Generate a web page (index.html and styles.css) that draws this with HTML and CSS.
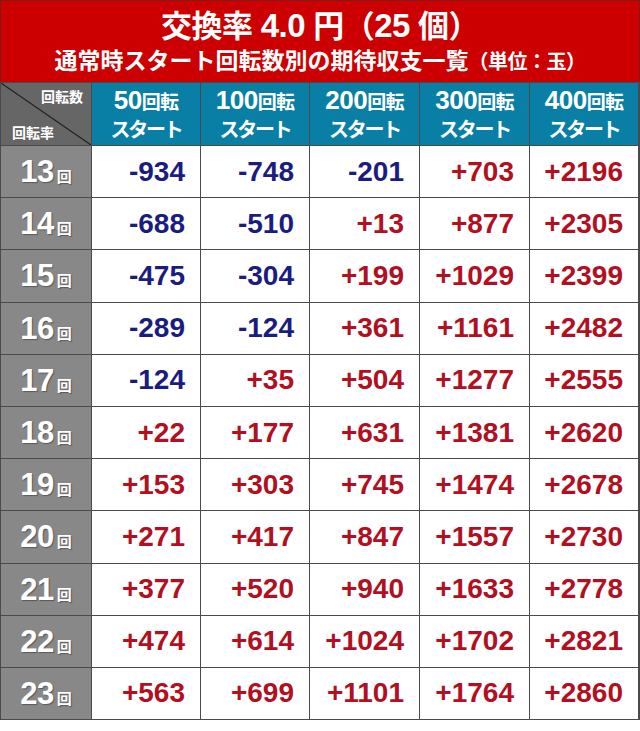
FILE: index.html
```html
<!DOCTYPE html>
<html lang="ja">
<head>
<meta charset="utf-8">
<link rel="stylesheet" href="styles.css">
</head>
<body>
<div class="sheet">
  <div class="title">
    <div class="t1">交換率 <span class="lat">4.0</span> 円（<span class="lat">25</span> 個）</div>
    <div class="t2">通常時スタート回転数別の期待収支一覧<span class="unit">（単位：玉）</span></div>
  </div>
  <div class="grid" id="grid">
    <div class="corner">
      <svg class="diag" viewBox="0 0 90 62" preserveAspectRatio="none"><line x1="0" y1="0" x2="90" y2="62" stroke="#222" stroke-width="1.2"/></svg>
      <span class="c-top">回転数</span>
      <span class="c-bot">回転率</span>
    </div>
    <div class="head"><div class="h1"><span class="hn">50</span>回転</div><div class="h2">スタート</div></div>
    <div class="head"><div class="h1"><span class="hn">100</span>回転</div><div class="h2">スタート</div></div>
    <div class="head"><div class="h1"><span class="hn">200</span>回転</div><div class="h2">スタート</div></div>
    <div class="head"><div class="h1"><span class="hn">300</span>回転</div><div class="h2">スタート</div></div>
    <div class="head"><div class="h1"><span class="hn">400</span>回転</div><div class="h2">スタート</div></div>
  </div>
</div>
<script src="app.js"></script>
</body>
</html>
```
FILE: app.js
```js
const data = [
  [13, -934, -748, -201, 703, 2196],
  [14, -688, -510, 13, 877, 2305],
  [15, -475, -304, 199, 1029, 2399],
  [16, -289, -124, 361, 1161, 2482],
  [17, -124, 35, 504, 1277, 2555],
  [18, 22, 177, 631, 1381, 2620],
  [19, 153, 303, 745, 1474, 2678],
  [20, 271, 417, 847, 1557, 2730],
  [21, 377, 520, 940, 1633, 2778],
  [22, 474, 614, 1024, 1702, 2821],
  [23, 563, 699, 1101, 1764, 2860]
];
const grid = document.getElementById('grid');
data.forEach(row => {
  const lab = document.createElement('div');
  lab.className = 'rlabel';
  lab.innerHTML = '<span class="rn">' + row[0] + '</span><span class="rk">回</span>';
  grid.appendChild(lab);
  for (let i = 1; i < row.length; i++) {
    const v = row[i];
    const c = document.createElement('div');
    c.className = 'cell ' + (v < 0 ? 'neg' : 'pos');
    c.textContent = (v < 0 ? '-' + Math.abs(v) : '+' + v);
    grid.appendChild(c);
  }
});
```
FILE: styles.css
```css
html, body { margin: 0; padding: 0; background: #fff; }
body { width: 640px; font-family: "Liberation Sans", "Noto Sans CJK JP", sans-serif; }
.sheet { width: 640px; }
.title {
  box-sizing: border-box;
  height: 82px;
  background: #cc0000;
  border: 1px solid #7a1a1a;
  border-bottom: none;
  color: #fff;
  font-weight: bold;
  text-align: center;
  display: flex;
  flex-direction: column;
  align-items: center;
  padding-top: 7px;
}
.t1 {
  font-family: "Liberation Sans", "Noto Sans CJK JP", sans-serif;
  font-size: 31px;
  line-height: 36px;
  letter-spacing: -0.5px;
  white-space: nowrap;
}
.t1 .lat { font-size: 33px; }
.t2 {
  font-family: "Noto Sans CJK JP", sans-serif;
  font-size: 23px;
  line-height: 28px;
  letter-spacing: 0;
  white-space: nowrap;
}
.t2 .unit { font-size: 20px; letter-spacing: -0.5px; }
.grid {
  display: grid;
  grid-template-columns: 90px 108px 108px 109px 109px 108px;
  grid-template-rows: 62px;
  grid-auto-rows: 51.2px;
  gap: 1px;
  padding: 1px;
  background: #4a4a4a;
}
.corner {
  position: relative;
  background: #666666;
  color: #fff;
  font-family: "Noto Sans CJK JP", sans-serif;
  font-weight: bold;
  font-size: 14px;
  line-height: 20px;
}
.diag { position: absolute; left: 0; top: 0; width: 100%; height: 100%; }
.c-top { position: absolute; right: 8px; top: 3px; }
.c-bot { position: absolute; left: 11px; bottom: 3px; }
.head {
  background: #0a7fa6;
  color: #fff;
  font-weight: bold;
  display: flex;
  flex-direction: column;
  align-items: center;
  justify-content: center;
  font-family: "Noto Sans CJK JP", sans-serif;
}
.h1 { font-size: 19px; line-height: 29px; letter-spacing: -0.8px; display: flex; align-items: baseline; }
.hn { font-family: "Liberation Sans", sans-serif; font-size: 26px; letter-spacing: -0.5px; line-height: 29px; }
.h2 { font-size: 20px; line-height: 28px; letter-spacing: -2.2px; }
.rlabel {
  background: #888888;
  color: #fff;
  font-weight: bold;
  display: flex;
  align-items: baseline;
  justify-content: center;
  padding-top: 9px;
  box-sizing: border-box;
  text-shadow: 1px 1px 1px rgba(0,0,0,0.35);
}
.rn { font-size: 31px; line-height: 34px; letter-spacing: -0.5px; }
.rk { font-family: "Noto Sans CJK JP", sans-serif; font-size: 15px; margin-left: 3px; }
.cell {
  background: #fff;
  font-weight: bold;
  font-size: 28px;
  display: flex;
  align-items: center;
  justify-content: flex-end;
  padding-right: 15px;
}
.neg { color: #1b1c7f; }
.pos { color: #b0101f; }
```
